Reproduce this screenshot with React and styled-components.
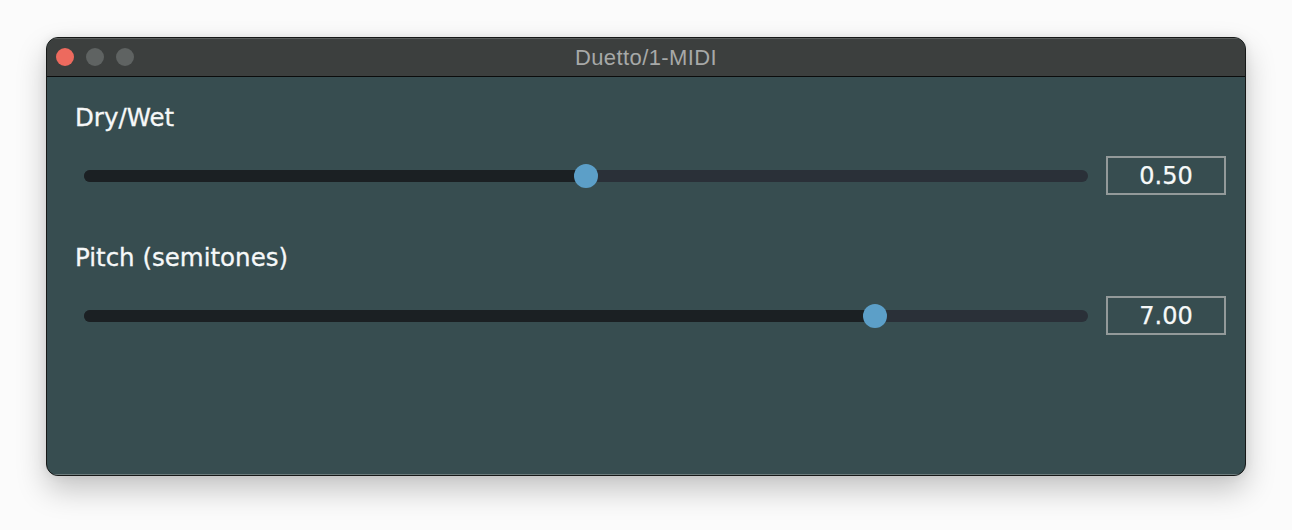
import React from 'react';
import styled, { createGlobalStyle } from 'styled-components';

const GlobalStyle = createGlobalStyle`
  html, body {
    margin: 0;
    padding: 0;
    background: #ffffff;
  }
  body {
    font-family: "DejaVu Sans", "Noto Sans", sans-serif;
  }
`;

const Page = styled.div`
  width: 1292px;
  height: 530px;
  box-sizing: border-box;
  padding: 37px 46px 0;
  background: #fbfbfb;
`;

const Window = styled.div`
  width: 1200px;
  height: 439px;
  box-sizing: border-box;
  border: 1px solid #161817;
  border-radius: 12px;
  overflow: hidden;
  display: flex;
  flex-direction: column;
  background: #374d50;
  box-shadow: 0 14px 30px rgba(0, 0, 0, 0.22), 0 0 10px rgba(0, 0, 0, 0.08);
`;

const TitleBar = styled.div`
  position: relative;
  height: 38px;
  flex-shrink: 0;
  display: flex;
  align-items: center;
  justify-content: center;
  background: #3c3f3e;
  border-bottom: 1px solid #0b0c0c;
  box-shadow: inset 0 1px 0 #5b5e5d;
`;

const Lights = styled.div`
  position: absolute;
  left: 9px;
  top: 10px;
  display: flex;
  gap: 12px;
`;

const Light = styled.span`
  width: 18px;
  height: 18px;
  border-radius: 50%;
  background: ${p => p.$color};
`;

const Title = styled.div`
  font-family: "Liberation Sans", Arial, sans-serif;
  font-size: 22px;
  letter-spacing: 0.4px;
  color: #a7a9a8;
  margin-top: 1px;
`;

const Body = styled.div`
  flex: 1;
  padding: 27px 19px 0 28px;
  display: flex;
  flex-direction: column;
  gap: 49px;
  box-shadow: inset 0 -1px 0 #6d7c7d;
`;

const Param = styled.div`
  display: flex;
  flex-direction: column;
  gap: 24px;
`;

const Label = styled.div`
  font-size: 24.5px;
  line-height: 28px;
  color: #f6f8f8;
  -webkit-text-stroke: 0.3px #f6f8f8;
`;

const Row = styled.div`
  display: flex;
  align-items: center;
  height: 39px;
  gap: 18px;
`;

const Track = styled.div`
  position: relative;
  flex: 1;
  margin-left: 9px;
  height: 12px;
  border-radius: 6px;
  background: #2a3038;
`;

const Fill = styled.div`
  position: absolute;
  left: 0;
  top: 0;
  bottom: 0;
  border-radius: 6px 0 0 6px;
  background: #1b2023;
`;

const Thumb = styled.div`
  position: absolute;
  top: 50%;
  width: 24px;
  height: 24px;
  margin: -12px 0 0 -12px;
  border-radius: 50%;
  background: #5c9fc8;
`;

const ValueBox = styled.div`
  width: 120px;
  height: 39px;
  box-sizing: border-box;
  border: 2px solid #939a9a;
  display: flex;
  align-items: center;
  justify-content: center;
  font-size: 24px;
  color: #f6f8f8;
  -webkit-text-stroke: 0.25px #f6f8f8;
`;

const params = [
  { label: 'Dry/Wet', value: 0.5, min: 0, max: 1 },
  { label: 'Pitch (semitones)', value: 7, min: -12, max: 12 },
];

const Slider = ({ value, min, max }) => {
  const f = (value - min) / (max - min);
  const pos = `calc(6px + ${f} * (100% - 12px))`;
  return (
    <Track>
      <Fill style={{ width: pos }} />
      <Thumb style={{ left: pos }} />
    </Track>
  );
};

const App = () => (
  <>
    <GlobalStyle />
    <Page>
      <Window>
        <TitleBar>
          <Lights>
            <Light $color="#ed6a5e" />
            <Light $color="#5f6362" />
            <Light $color="#5f6362" />
          </Lights>
          <Title>Duetto/1-MIDI</Title>
        </TitleBar>
        <Body>
          {params.map(p => (
            <Param key={p.label}>
              <Label>{p.label}</Label>
              <Row>
                <Slider value={p.value} min={p.min} max={p.max} />
                <ValueBox>{p.value.toFixed(2)}</ValueBox>
              </Row>
            </Param>
          ))}
        </Body>
      </Window>
    </Page>
  </>
);

export default App;
